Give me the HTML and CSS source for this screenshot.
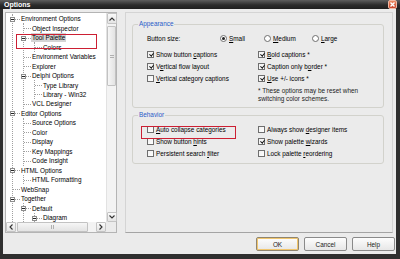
FILE: index.html
```html
<!DOCTYPE html>
<html lang="en">
<head>
    <meta charset="utf-8">
    <title>Options</title>
    <meta name="viewport" content="width=device-width, initial-scale=1">
    <link rel="stylesheet" href="styles.css">
</head>
<body>
    <div class="window">
        <div class="titlebar">
            <span class="title">Options</span>
            <span class="close">
                <svg width="7" height="7" viewBox="0 0 7 7"><path d="M1.5 1.5 L5.5 5.5 M5.5 1.5 L1.5 5.5" stroke="#fff" stroke-width="1.4"/></svg>
            </span>
        </div>

        <div class="body">
            <div class="main">
                <!-- options tree -->
                <div class="tree">
                    <div class="tree-view">
                        <div class="level root">
                            <div class="node"><span class="twig"><i class="box"></i></span><span class="lbl">Environment Options</span></div>
                            <div class="level">
                                <div class="node"><span class="twig"></span><span class="lbl">Object Inspector</span></div>
                                <div class="node"><span class="twig"><i class="box"></i></span><span class="lbl sel">Tool Palette</span></div>
                                <div class="level">
                                    <div class="node"><span class="twig"></span><span class="lbl">Colors</span></div>
                                </div>
                                <div class="node"><span class="twig"></span><span class="lbl">Environment Variables</span></div>
                                <div class="node"><span class="twig"></span><span class="lbl">Explorer</span></div>
                                <div class="node"><span class="twig"><i class="box"></i></span><span class="lbl">Delphi Options</span></div>
                                <div class="level">
                                    <div class="node"><span class="twig"></span><span class="lbl">Type Library</span></div>
                                    <div class="node"><span class="twig"></span><span class="lbl">Library - Win32</span></div>
                                </div>
                                <div class="node"><span class="twig"></span><span class="lbl">VCL Designer</span></div>
                            </div>
                            <div class="node"><span class="twig"><i class="box"></i></span><span class="lbl">Editor Options</span></div>
                            <div class="level">
                                <div class="node"><span class="twig"></span><span class="lbl">Source Options</span></div>
                                <div class="node"><span class="twig"></span><span class="lbl">Color</span></div>
                                <div class="node"><span class="twig"></span><span class="lbl">Display</span></div>
                                <div class="node"><span class="twig"></span><span class="lbl">Key Mappings</span></div>
                                <div class="node"><span class="twig"></span><span class="lbl">Code Insight</span></div>
                            </div>
                            <div class="node"><span class="twig"><i class="box"></i></span><span class="lbl">HTML Options</span></div>
                            <div class="level">
                                <div class="node"><span class="twig"></span><span class="lbl">HTML Formatting</span></div>
                            </div>
                            <div class="node"><span class="twig"></span><span class="lbl">WebSnap</span></div>
                            <div class="node"><span class="twig"><i class="box"></i></span><span class="lbl">Together</span></div>
                            <div class="level">
                                <div class="node"><span class="twig"><i class="box"></i></span><span class="lbl">Default</span></div>
                                <div class="level">
                                    <div class="node"><span class="twig"><i class="box"></i></span><span class="lbl">Diagram</span></div>
                                </div>
                            </div>
                        </div>
                    </div>

                    <div class="vscroll">
                        <span class="sb-btn">
                            <svg width="6" height="4" viewBox="0 0 6 4"><path d="M0.5 3.5 L3 1 L5.5 3.5" fill="none" stroke="#333" stroke-width="1.1"/></svg>
                        </span>
                        <div class="sb-track"><span class="thumb v"><i></i></span></div>
                        <span class="sb-btn">
                            <svg width="6" height="4" viewBox="0 0 6 4"><path d="M0.5 0.5 L3 3 L5.5 0.5" fill="none" stroke="#333" stroke-width="1.1"/></svg>
                        </span>
                    </div>
                    <div class="hscroll">
                        <span class="sb-btn">
                            <svg width="4" height="6" viewBox="0 0 4 6"><path d="M3.5 0.5 L1 3 L3.5 5.5" fill="none" stroke="#333" stroke-width="1.1"/></svg>
                        </span>
                        <div class="sb-track"><span class="thumb h"><i></i></span></div>
                        <span class="sb-btn">
                            <svg width="4" height="6" viewBox="0 0 4 6"><path d="M0.5 0.5 L3 3 L0.5 5.5" fill="none" stroke="#333" stroke-width="1.1"/></svg>
                        </span>
                    </div>
                    <div class="corner"></div>
                </div>

                <!-- tool palette page -->
                <div class="pane">
                    <fieldset class="group appearance">
                        <legend>Appearance</legend>
                        <div class="size-row">
                            <span class="size-label">Button size:</span>
                            <label class="radio small"><span class="rb on"></span><span><u>S</u>mall</span></label>
                            <label class="radio medium"><span class="rb"></span><span><u>M</u>edium</span></label>
                            <label class="radio"><span class="rb"></span><span><u>L</u>arge</span></label>
                        </div>
                        <div class="checks">
                            <div class="col">
                                <label class="check"><span class="cb on"></span><span>Show button <u>c</u>aptions</span></label>
                                <label class="check"><span class="cb on"></span><span>V<u>e</u>rtical flow layout</span></label>
                                <label class="check"><span class="cb"></span><span><u>V</u>ertical category captions</span></label>
                            </div>
                            <div class="col">
                                <label class="check"><span class="cb on"></span><span><u>B</u>old captions *</span></label>
                                <label class="check"><span class="cb on"></span><span>Caption only b<u>o</u>rder *</span></label>
                                <label class="check"><span class="cb on"></span><span><u>U</u>se +/- icons *</span></label>
                                <p class="note">* These options may be reset when<br>switching color schemes.</p>
                            </div>
                        </div>
                    </fieldset>

                    <fieldset class="group behavior">
                        <legend>Behavior</legend>
                        <div class="checks">
                            <div class="col">
                                <label class="check"><span class="cb"></span><span><u>A</u>uto collapse categories</span></label>
                                <label class="check"><span class="cb"></span><span>Show button <u>h</u>ints</span></label>
                                <label class="check"><span class="cb"></span><span>Persistent search <u>f</u>ilter</span></label>
                            </div>
                            <div class="col">
                                <label class="check"><span class="cb"></span><span>Always show <u>d</u>esigner items</span></label>
                                <label class="check"><span class="cb on"></span><span>Show palette <u>w</u>izards</span></label>
                                <label class="check"><span class="cb"></span><span>Lock palette <u>r</u>eordering</span></label>
                            </div>
                        </div>
                    </fieldset>
                </div>
            </div>

            <div class="buttons">
                <button class="btn default">OK</button>
                <button class="btn">Cancel</button>
                <button class="btn">Help</button>
            </div>
        </div>

        <!-- red annotation frames -->
        <div class="mark mark-tree"></div>
        <div class="mark mark-auto"></div>
    </div>
</body>
</html>
```

FILE: styles.css
```css
:root {
    --face: #ebebeb;
    --line: #a0a0a0;
    --frame: #d2d2cc;
    --caption: #2a5bc8;
    --mark: #cc1f33;
}

* {
    margin: 0;
    padding: 0;
    box-sizing: border-box;
}

body {
    font-family: 'Liberation Sans', Arial, sans-serif;
    font-size: 6.4px;
    color: #000;
    background: #fff;
}

u {
    text-decoration: underline;
    text-underline-offset: 1px;
}

.window {
    position: relative;
    width: 400px;
    height: 259px;
    background: #2f2f2f;
    padding: 0 4px 5px 3px;
    display: flex;
    flex-direction: column;
}

/* title bar */
.titlebar {
    height: 13px;
    margin: 0 -4px 0 -3px;
    padding: 0 3px 0 4px;
    display: flex;
    align-items: center;
    justify-content: space-between;
    background: linear-gradient(#5e5e5e, #2c2c2c 55%, #1f1f1f);
    color: #fff;
}

.title {
    font-size: 7px;
    font-weight: bold;
}

.close {
    width: 9px;
    height: 9px;
    border: 1px solid #f0b9a4;
    border-radius: 2px;
    background: linear-gradient(#eb8a62, #c9452b);
    display: grid;
    place-items: center;
}

.body {
    flex: 1;
    background: var(--face);
    padding: 3px 2px 3px 2px;
    display: flex;
    flex-direction: column;
}

.main {
    flex: 1;
    display: flex;
    gap: 8px;
}

/* tree */
.tree {
    width: 112px;
    flex: none;
    background: #fff;
    border: 1px solid #b4b4b4;
    display: grid;
    grid-template-columns: 1fr 10px;
    grid-template-rows: 1fr 10px;
}

.tree-view {
    overflow: hidden;
    padding-top: 1px;
}

.level {
    border-left: 1px dotted var(--line);
}

.root {
    margin-left: 6px;
}

.level .level {
    margin-left: 10px;
}

.node {
    height: 9.48px;
    display: flex;
    align-items: center;
    white-space: nowrap;
}

.twig {
    position: relative;
    width: 7px;
    height: 100%;
    flex: none;
}

.twig::before {
    content: "";
    position: absolute;
    left: 0;
    right: 0;
    top: 50%;
    border-top: 1px dotted var(--line);
}

.box {
    position: absolute;
    left: -3px;
    top: calc(50% - 2px);
    width: 5px;
    height: 5px;
    border: 1px solid #8d8d8d;
    background: #fff;
    display: grid;
    place-items: center;
}

.box::after {
    content: "";
    width: 3px;
    height: 1px;
    background: #222;
}

.lbl {
    line-height: 9px;
    padding: 0 1px;
}

.lbl.sel {
    background: #d4d4d4;
}

/* scroll bars */
.vscroll,
.hscroll {
    display: flex;
    background: #f3f3f3;
}

.vscroll {
    flex-direction: column;
    border-left: 1px solid #e2e2e2;
}

.sb-btn {
    flex: none;
    width: 10px;
    height: 10px;
    background: linear-gradient(#fafafa, #e4e4e4);
    border: 1px solid #c4c4c4;
    border-radius: 1px;
    display: grid;
    place-items: center;
}

.vscroll .sb-btn:first-child {
    height: 11px;
}

.sb-track {
    flex: 1;
    display: flex;
}

.vscroll .sb-track {
    flex-direction: column;
}

.thumb {
    background: linear-gradient(90deg, #f6f6f6, #e3e3e3);
    border: 1px solid #c2c2c2;
    border-radius: 1px;
    display: grid;
    place-items: center;
}

.thumb.v {
    margin-top: 2px;
    height: 60px;
}

.thumb.h {
    margin-left: 1px;
    width: 71px;
    background: linear-gradient(#f6f6f6, #e3e3e3);
}

.thumb i {
    width: 4px;
    height: 3px;
    border-top: 1px solid #b0b0b0;
    border-bottom: 1px solid #b0b0b0;
}

.thumb.h i {
    width: 3px;
    height: 4px;
    border: none;
    border-left: 1px solid #b0b0b0;
    border-right: 1px solid #b0b0b0;
}

.corner {
    background: var(--face);
}

/* right page */
.pane {
    flex: 1;
    margin-right: 1px;
    border: 1px solid #d4d4d4;
    border-bottom-color: #a4a4a4;
    padding: 7px 8px 0 6px;
}

.group {
    border: 1px solid var(--frame);
    border-radius: 3px;
    padding: 5px 4px 4px 14px;
}

.group legend {
    margin-left: -9px;
    padding: 0 1px;
    line-height: 8px;
    color: var(--caption);
}

.behavior {
    margin-top: 3px;
    padding-top: 4px;
}

.size-row {
    height: 10px;
    display: flex;
    align-items: center;
}

.size-label {
    width: 73px;
}

.radio {
    display: flex;
    align-items: center;
    gap: 2px;
}

.radio.small {
    width: 44px;
}

.radio.medium {
    width: 48px;
}

.rb {
    width: 7px;
    height: 7px;
    border: 1px solid #6e6e6e;
    border-radius: 50%;
    background: #fff;
    display: grid;
    place-items: center;
}

.rb.on::after {
    content: "";
    width: 3px;
    height: 3px;
    border-radius: 50%;
    background: #222;
}

.checks {
    display: grid;
    grid-template-columns: 111px 1fr;
}

.appearance .checks {
    margin-top: 5px;
}

.check {
    height: 12px;
    display: flex;
    align-items: center;
    gap: 2px;
    white-space: nowrap;
}

.cb {
    position: relative;
    width: 7px;
    height: 7px;
    flex: none;
    border: 1px solid #6e6e6e;
    background: linear-gradient(135deg, #f0f0f0, #fff);
}

.cb.on::after {
    content: "";
    position: absolute;
    left: 1.6px;
    top: 0;
    width: 1.6px;
    height: 3.2px;
    border: solid #111;
    border-width: 0 1.2px 1.2px 0;
    transform: rotate(40deg);
}

.note {
    margin-top: 3px;
    line-height: 8px;
    color: #222;
}

/* dialog buttons */
.buttons {
    margin-top: 4px;
    margin-right: -1px;
    display: flex;
    justify-content: flex-end;
    gap: 5px;
}

.btn {
    width: 43px;
    height: 14px;
    font-family: inherit;
    font-size: 6.4px;
    color: #222;
    border: 1px solid #8a8a8a;
    border-radius: 2px;
    background: linear-gradient(#fdfdfd, #e7e7e7);
}

.btn.default {
    border-color: #8f8570;
    box-shadow: inset 0 0 0 1px #f1c66e;
}

/* annotation frames */
.mark {
    position: absolute;
    border: 1px solid var(--mark);
}

.mark-tree {
    left: 16px;
    top: 34px;
    width: 81px;
    height: 15px;
}

.mark-auto {
    left: 141px;
    top: 126px;
    width: 95px;
    height: 13px;
}
```
